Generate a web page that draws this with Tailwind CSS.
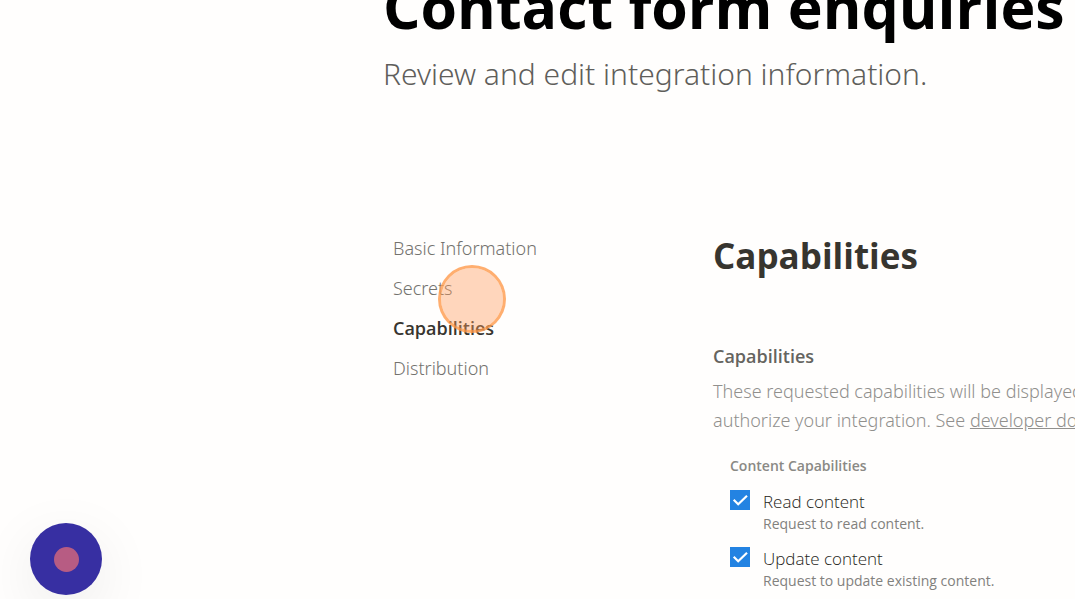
<!DOCTYPE html>
<html lang="en">
<head>
<meta charset="utf-8">
<meta name="viewport" content="width=device-width, initial-scale=1">
<title>Contact form enquiries</title>
<script src="https://cdn.jsdelivr.net/npm/@tailwindcss/browser@4"></script>
</head>
<body class="relative h-screen overflow-hidden bg-[#fffefd] font-['Open_Sans','Noto_Sans',sans-serif] text-[#37352f]">
<div class="pl-[383px]">
  <header class="-mt-9 whitespace-nowrap">
    <h1 class="text-[59px] leading-[84px] font-bold text-black">Contact form enquiries</h1>
    <p class="pt-1 font-['Noto_Sans',sans-serif] text-[30px] leading-[44px] font-light text-[#5f5e5b]">Review and edit integration information.</p>
  </header>
  <div class="flex pt-[132px]">
    <nav class="w-80 shrink-0 pl-[10px]" aria-label="Integration settings">
      <ul class="font-['Noto_Sans',sans-serif] text-lg leading-10 font-light text-[#73726e]">
        <li><a href="#basic">Basic Information</a></li>
        <li><a href="#secrets">Secrets</a></li>
        <li><a href="#capabilities" class="font-['Open_Sans',sans-serif] font-semibold text-[#37352f]" aria-current="page">Capabilities</a></li>
        <li><a href="#distribution">Distribution</a></li>
      </ul>
    </nav>
    <main id="capabilities" class="shrink-0 pl-[10px] whitespace-nowrap">
      <h2 class="pt-1 text-[35px] leading-[48px] font-bold">Capabilities</h2>
      <h3 class="pt-[62px] text-lg leading-7 font-semibold text-[#65645f]">Capabilities</h3>
      <p class="pt-[7px] font-['Noto_Sans',sans-serif] text-lg leading-[29px] font-light text-[#91908d]">These requested capabilities will be displayed to users when they<br>authorize your integration. See <a href="#docs" class="underline">developer docs</a> to learn more.</p>
      <fieldset class="pt-[19px] pl-[17px]">
        <legend class="contents"><span class="block text-sm leading-6 font-semibold text-[#8a8985]">Content Capabilities</span></legend>
        <div class="flex gap-[13px] pt-3">
          <span class="relative block size-5 shrink-0">
            <input id="read" type="checkbox" checked class="block size-5 appearance-none bg-white ring-1 ring-[#37352f] ring-inset checked:bg-[#2383e2] checked:ring-0">
            <svg class="pointer-events-none absolute inset-0 size-5" viewBox="0 0 20 20" fill="none" stroke="#fff" stroke-width="2.2"><path d="M3.7 9.8 8.2 14.2 17 5.8"/></svg>
          </span>
          <label for="read" class="block"><span class="block text-[17px] leading-[23px] font-light text-[#252420]">Read content</span><span class="block text-sm leading-[22px] text-[#82817d]">Request to read content.</span></label>
        </div>
        <div class="flex gap-[13px] pt-3">
          <span class="relative block size-5 shrink-0">
            <input id="update" type="checkbox" checked class="block size-5 appearance-none bg-white ring-1 ring-[#37352f] ring-inset checked:bg-[#2383e2] checked:ring-0">
            <svg class="pointer-events-none absolute inset-0 size-5" viewBox="0 0 20 20" fill="none" stroke="#fff" stroke-width="2.2"><path d="M3.7 9.8 8.2 14.2 17 5.8"/></svg>
          </span>
          <label for="update" class="block"><span class="block text-[17px] leading-[23px] font-light text-[#252420]">Update content</span><span class="block text-sm leading-[22px] text-[#82817d]">Request to update existing content.</span></label>
        </div>
      </fieldset>
    </main>
  </div>
</div>
<div class="pointer-events-none absolute top-[265px] left-[438px] size-[68px] rounded-full border-3 border-[#ff9a4b]/80 bg-[#ff9a5a]/40 bg-clip-padding"></div>
<button type="button" aria-label="Record" class="absolute bottom-1 left-[30px] flex size-[72px] items-center justify-center rounded-full bg-[#372fa2] shadow-[0_16px_60px_rgba(0,0,0,0.08)]"><span class="size-[25px] rounded-full bg-[#b75c83]"></span></button>
</body>
</html>
